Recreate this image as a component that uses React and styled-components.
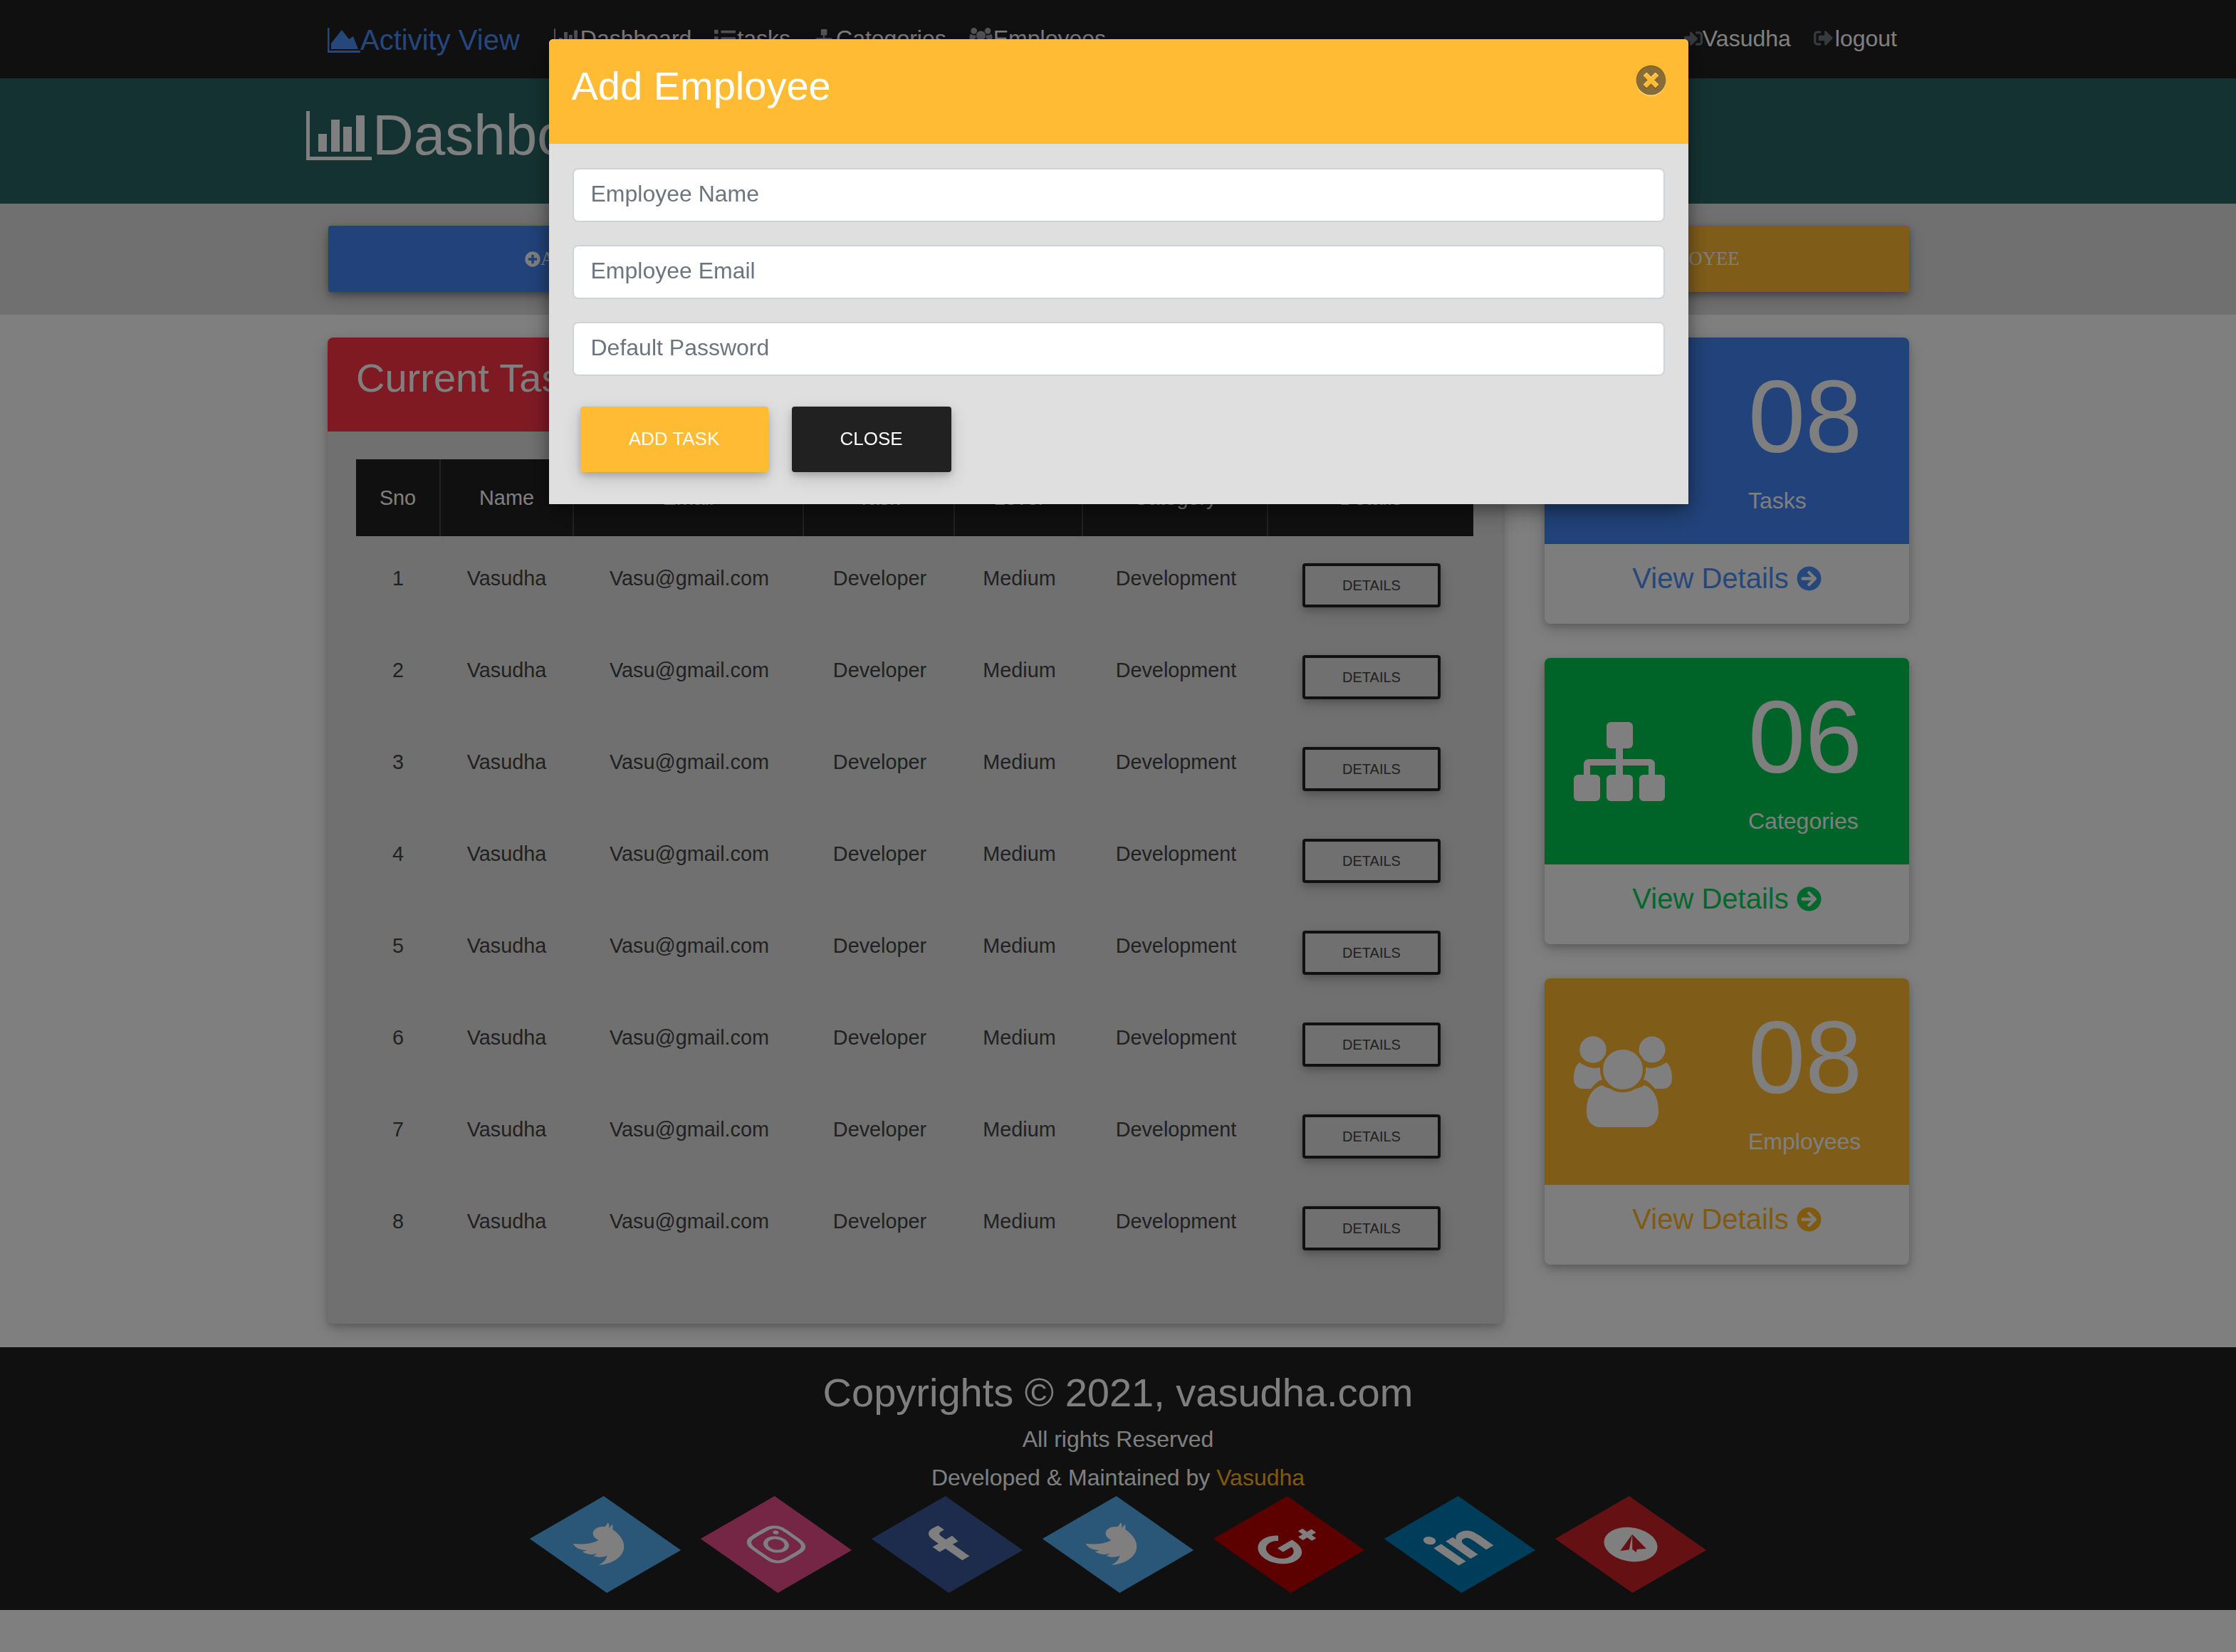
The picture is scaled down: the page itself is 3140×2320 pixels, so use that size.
import styled, { createGlobalStyle } from "styled-components";
import {
  FaList,
  FaPlusCircle,
  FaSignInAlt,
  FaSignOutAlt,
  FaTimesCircle,
  FaArrowCircleRight,
  FaTasks,
  FaTwitter,
  FaInstagram,
  FaFacebookF,
  FaGooglePlusG,
  FaLinkedinIn,
} from "react-icons/fa";

const rows = [1, 2, 3, 4, 5, 6, 7, 8];
const columns = [
  { label: "Sno", width: 118 },
  { label: "Name", width: 187 },
  { label: "Email", width: 323 },
  { label: "Task", width: 212 },
  { label: "Level", width: 180 },
  { label: "Category", width: 260 },
  { label: "Details", width: 289 },
];

const GlobalStyle = createGlobalStyle`
  * { box-sizing: border-box; }
  body {
    margin: 0;
    background: #fff;
    font-family: "Liberation Sans", Arial, sans-serif;
    font-size: 32px;
    color: #424242;
  }
`;

const AreaIcon = () => (
  <svg width="46" height="35" viewBox="0 0 46 35" fill="currentColor">
    <path d="M0 0h2.5v32H46v3H0z" />
    <path d="M5 30v-8L20 3l10 13 6-4 7 18z" />
  </svg>
);

const BarIcon = ({ width, height }) => (
  <svg width={width} height={height} viewBox="0 0 92 69" fill="currentColor">
    <path d="M0 0h5v64h87v5H0z" />
    <rect x="17" y="32" width="12" height="25" />
    <rect x="35" y="12" width="12" height="45" />
    <rect x="52" y="22" width="12" height="35" />
    <rect x="70" y="6" width="12" height="51" />
  </svg>
);

const SitemapIcon = ({ width, height }) => (
  <svg width={width} height={height} viewBox="0 0 128 111" fill="currentColor">
    <rect x="46" y="0" width="37" height="37" rx="6" />
    <rect x="0" y="74" width="37" height="37" rx="6" />
    <rect x="46" y="74" width="37" height="37" rx="6" />
    <rect x="92" y="74" width="36" height="37" rx="6" />
    <rect x="59" y="36" width="10" height="40" />
    <path d="M14 76V60q0-8 8-8h84q8 0 8 8v16h-9V61H23v15z" />
  </svg>
);

const UsersIcon = ({ width, height, cut }) => (
  <svg width={width} height={height} viewBox="0 0 138 128" fill="currentColor">
    <circle cx="27" cy="19" r="18.7" />
    <circle cx="110" cy="19" r="18.5" />
    <path d="M8 37c6 4 14 8 22 8 3 0 5-1 7-1 0 6 1 12 4 17-7 1-12 7-17 13H14C4 74 0 68 0 60c0-10 2-18 8-23z" />
    <path d="M130 37c-6 4-14 8-22 8-3 0-5-1-7-1 0 6-1 12-4 17 7 1 12 7 17 13h10c10 0 14-6 14-14 0-10-2-18-8-23z" />
    <path d="M18 106c0-18 6-32 22-37 10 9 48 9 59 0 14 5 20 19 20 37 0 14-9 22-19 22H37c-10 0-19-8-19-22z" />
    <circle cx="69" cy="47" r="30" stroke={cut} strokeWidth="4" />
  </svg>
);

const PlaneIcon = () => (
  <svg width="60" height="60" viewBox="0 0 60 60" fill="currentColor" fillRule="evenodd">
    <path d="M30 0a30 30 0 1 0 0 60a30 30 0 1 0 0-60zM44.3 18.7L12.5 30.4L22 35.25zM44.3 18.7L25.4 36.9L25 43.4L29.5 40.2L38.5 46.2z" />
  </svg>
);

export default function App() {
  return (
    <>
      <GlobalStyle />
      <Nav>
        <Brand>
          <AreaIcon />
          Activity View
        </Brand>
        <NavLinks>
          <NavLink>
            <NavIcon $width={37}><BarIcon width={37} height={28} /></NavIcon>
            Dashboard
          </NavLink>
          <NavLink>
            <NavIcon $width={32}><FaList size={30} /></NavIcon>
            tasks
          </NavLink>
          <NavLink>
            <NavIcon $width={32}><SitemapIcon width={30} height={26} /></NavIcon>
            Categories
          </NavLink>
          <NavLink>
            <NavIcon $width={34}><UsersIcon width={33} height={30} cut="#212121" /></NavIcon>
            Employees
          </NavLink>
        </NavLinks>
        <NavRight>
          <NavLink>
            <NavIcon $width={26} $dark><FaSignInAlt size={26} /></NavIcon>
            Vasudha
          </NavLink>
          <NavLink>
            <NavIcon $width={30} $dark><FaSignOutAlt size={27} /></NavIcon>
            logout
          </NavLink>
        </NavRight>
      </Nav>

      <TitleBand>
        <BarIcon width={92} height={69} />
        <PageTitle>Dashboard</PageTitle>
      </TitleBand>

      <ActionBand>
        <ActionButton $bg="#4285f4"><FaPlusCircle size={22} />ADD TASK</ActionButton>
        <ActionButton $bg="#00c851"><FaPlusCircle size={22} />ADD CATEGORY</ActionButton>
        <ActionButton $bg="#ffbb33"><FaPlusCircle size={22} />ADD EMPLOYEE</ActionButton>
      </ActionBand>

      <Main>
        <TaskCard>
          <TaskHeader>Current Tasks</TaskHeader>
          <TaskBody>
            <TaskTable>
              <colgroup>
                {columns.map((c) => (
                  <TableCol key={c.label} $width={c.width} />
                ))}
              </colgroup>
              <thead>
                <tr>
                  {columns.map((c) => (
                    <HeadCell key={c.label}>{c.label}</HeadCell>
                  ))}
                </tr>
              </thead>
              <tbody>
                {rows.map((n) => (
                  <tr key={n}>
                    <Cell>{n}</Cell>
                    <Cell>Vasudha</Cell>
                    <Cell>Vasu@gmail.com</Cell>
                    <Cell>Developer</Cell>
                    <Cell>Medium</Cell>
                    <Cell>Development</Cell>
                    <Cell>
                      <DetailsButton>DETAILS</DetailsButton>
                    </Cell>
                  </tr>
                ))}
              </tbody>
            </TaskTable>
          </TaskBody>
        </TaskCard>

        <StatColumn>
          <StatCard>
            <StatTop $bg="#4285f4">
              <StatIcon><FaTasks size={110} /></StatIcon>
              <StatText>
                <StatNumber>08</StatNumber>
                <StatLabel>Tasks</StatLabel>
              </StatText>
            </StatTop>
            <StatLink $color="#4a8ef8">View Details <FaArrowCircleRight size={35} /></StatLink>
          </StatCard>
          <StatCard>
            <StatTop $bg="#00c851">
              <StatIcon><SitemapIcon width={128} height={111} /></StatIcon>
              <StatText>
                <StatNumber>06</StatNumber>
                <StatLabel>Categories</StatLabel>
              </StatText>
            </StatTop>
            <StatLink $color="#00d058">View Details <FaArrowCircleRight size={35} /></StatLink>
          </StatCard>
          <StatCard>
            <StatTop $bg="#ffbb33">
              <StatIcon><UsersIcon width={138} height={128} cut="#ffbb33" /></StatIcon>
              <StatText>
                <StatNumber>08</StatNumber>
                <StatLabel>Employees</StatLabel>
              </StatText>
            </StatTop>
            <StatLink $color="#ffb41e">View Details <FaArrowCircleRight size={35} /></StatLink>
          </StatCard>
        </StatColumn>
      </Main>

      <Footer>
        <Copyright>Copyrights © 2021, vasudha.com</Copyright>
        <FooterLine>All rights Reserved</FooterLine>
        <FooterLine $gap={6}>
          Developed &amp; Maintained by <FooterName>Vasudha</FooterName>
        </FooterLine>
        <SocialRow>
          <SocialTile $bg="#55acee"><FaTwitter size={64} /></SocialTile>
          <SocialTile $bg="#ea4c89"><FaInstagram size={64} /></SocialTile>
          <SocialTile $bg="#3b5998"><FaFacebookF size={60} /></SocialTile>
          <SocialTile $bg="#55acee"><FaTwitter size={64} /></SocialTile>
          <SocialTile $bg="#bb0000"><FaGooglePlusG size={82} /></SocialTile>
          <SocialTile $bg="#007bb6"><FaLinkedinIn size={66} /></SocialTile>
          <SocialTile $bg="#cb2027"><PlaneIcon /></SocialTile>
        </SocialRow>
      </Footer>

      <Backdrop>
        <Modal>
          <ModalHeader>
            <ModalTitle>Add Employee</ModalTitle>
            <CloseIcon><FaTimesCircle size={43} /></CloseIcon>
          </ModalHeader>
          <ModalBody>
            <Field placeholder="Employee Name" />
            <Field placeholder="Employee Email" />
            <Field placeholder="Default Password" />
            <ModalActions>
              <ModalButton $bg="#ffbb33" $width={264}>ADD TASK</ModalButton>
              <ModalButton $bg="#212121" $width={224}>CLOSE</ModalButton>
            </ModalActions>
          </ModalBody>
        </Modal>
      </Backdrop>
    </>
  );
}

const Nav = styled.nav`
  display: flex;
  align-items: center;
  height: 110px;
  padding: 0 460px;
  background: #212121;
  color: #fff;
`;

const Brand = styled.div`
  display: flex;
  align-items: center;
  font-size: 40px;
  color: #4a8ef8;
  margin-top: 3px;
`;

const NavLinks = styled.div`
  display: flex;
  margin-left: 32px;
  margin-top: -3px;
`;

const NavRight = styled(NavLinks)`
  margin-left: auto;
`;

const NavLink = styled.a`
  display: flex;
  align-items: center;
  padding: 0 16px;
  line-height: 48px;
`;

const NavIcon = styled.span`
  display: inline-flex;
  width: ${(p) => p.$width}px;
  color: ${(p) => (p.$dark ? "#6c757d" : "#aaa")};
`;

const TitleBand = styled.header`
  display: flex;
  align-items: flex-start;
  height: 176px;
  padding: 46px 0 0 430px;
  background: #2a6464;
  color: #fff;
`;

const PageTitle = styled.h1`
  margin: -14px 0 0 1px;
  font-size: 80px;
  font-weight: 400;
  line-height: 96px;
`;

const ActionBand = styled.section`
  display: grid;
  grid-template-columns: repeat(3, 1fr);
  gap: 52px;
  height: 156px;
  padding: 31px 459px 0 461px;
  background: #e0e0e0;
`;

const ActionButton = styled.button`
  height: 93px;
  border: 0;
  border-radius: 4px;
  background: ${(p) => p.$bg};
  color: #fff;
  font-family: "Liberation Serif", serif;
  font-size: 26.67px;
  box-shadow: 0 4px 10px rgba(0, 0, 0, 0.3), 0 8px 24px rgba(0, 0, 0, 0.2);

  svg {
    vertical-align: -3px;
  }
`;

const Main = styled.main`
  display: flex;
  justify-content: space-between;
  padding: 32px 459px 33px 460px;
`;

const TaskCard = styled.article`
  width: 1650px;
  height: 1385px;
  border-radius: 8px;
  background: #e0e0e0;
  box-shadow: 0 4px 10px rgba(0, 0, 0, 0.18), 0 8px 24px rgba(0, 0, 0, 0.16);
`;

const TaskHeader = styled.h2`
  height: 132px;
  margin: 0;
  padding: 23px 40px 0;
  border-radius: 8px 8px 0 0;
  background: #ff3547;
  color: #fff;
  font-size: 56px;
  font-weight: 400;
  line-height: 67px;
`;

const TaskBody = styled.div`
  padding: 39px 41px 0 40px;
`;

const TaskTable = styled.table`
  width: 1569px;
  border-collapse: collapse;
  table-layout: fixed;
  font-size: 28.8px;
`;

const TableCol = styled.col`
  width: ${(p) => p.$width}px;
`;

const HeadCell = styled.th`
  height: 108px;
  padding: 0;
  border-right: 2px solid #444;
  background: #212121;
  color: #fff;
  font-weight: 400;
  text-align: center;

  &:last-child {
    border-right: 0;
  }
`;

const Cell = styled.td`
  height: 129px;
  padding: 38px 0 0;
  text-align: center;
  vertical-align: top;
  line-height: 43px;

  &:nth-child(n + 3):not(:last-child) {
    padding-left: 3px;
  }
`;

const DetailsButton = styled.button`
  display: block;
  width: 194px;
  height: 62px;
  margin: 0 auto 0 49px;
  border: 4px solid #212121;
  border-radius: 4px;
  background: transparent;
  color: #424242;
  font-family: "Liberation Sans", Arial, sans-serif;
  font-size: 20px;
  box-shadow: 0 4px 10px rgba(0, 0, 0, 0.18), 0 8px 20px rgba(0, 0, 0, 0.12);
`;

const StatColumn = styled.aside`
  display: flex;
  flex-direction: column;
  gap: 48px;
  width: 512px;
`;

const StatCard = styled.article`
  height: 402px;
  overflow: hidden;
  border-radius: 8px;
  background: #fbfbfb;
  box-shadow: 0 4px 10px rgba(0, 0, 0, 0.18), 0 8px 24px rgba(0, 0, 0, 0.16);
`;

const StatTop = styled.div`
  display: flex;
  height: 290px;
  background: ${(p) => p.$bg};
  color: #fff;
`;

const StatIcon = styled.div`
  display: flex;
  align-items: center;
  width: 286px;
  padding-left: 41px;
`;

const StatText = styled.div`
  padding-top: 40px;
`;

const StatNumber = styled.div`
  font-size: 144px;
  line-height: 144px;
`;

const StatLabel = styled.div`
  margin-top: 21px;
  line-height: 48px;
`;

const StatLink = styled.a`
  display: flex;
  align-items: center;
  justify-content: center;
  gap: 11px;
  height: 112px;
  padding: 0 0 16px;
  color: ${(p) => p.$color};
  font-size: 40px;
`;

const Footer = styled.footer`
  height: 369px;
  padding-top: 30px;
  background: #212121;
  color: #fff;
  text-align: center;
`;

const Copyright = styled.div`
  font-size: 56px;
  line-height: 67px;
`;

const FooterLine = styled.div`
  margin-top: ${(p) => p.$gap || 8}px;
  line-height: 48px;
`;

const FooterName = styled.span`
  color: #ffb41e;
`;

const SocialRow = styled.div`
  display: flex;
  justify-content: center;
  gap: 120px;
  margin-top: 10px;
`;

const SocialTile = styled.a`
  display: flex;
  align-items: center;
  justify-content: center;
  width: 120px;
  height: 120px;
  background: ${(p) => p.$bg};
  color: #fff;
  transform: rotate(-30deg) skew(25deg);
`;

const Backdrop = styled.div`
  position: fixed;
  inset: 0;
  display: flex;
  justify-content: center;
  align-items: flex-start;
  padding: 55px 0 0 1px;
  background: rgba(0, 0, 0, 0.5);
`;

const Modal = styled.div`
  width: 1600px;
  border-radius: 6px 6px 0 0;
  background: #dfdfdf;
  box-shadow: 0 10px 34px rgba(0, 0, 0, 0.3), 0 6px 20px rgba(0, 0, 0, 0.25);
`;

const ModalHeader = styled.div`
  display: flex;
  justify-content: space-between;
  height: 147px;
  padding: 32px 31px 0 32px;
  border-radius: 6px 6px 0 0;
  background: #ffbb33;
`;

const ModalTitle = styled.h4`
  margin: 0;
  color: #fff;
  font-size: 56px;
  font-weight: 400;
  line-height: 67px;
`;

const CloseIcon = styled.span`
  margin-top: 4px;
  color: rgba(0, 0, 0, 0.48);
  filter: drop-shadow(0 2px 0 rgba(255, 255, 255, 0.6));
`;

const ModalBody = styled.div`
  display: flex;
  flex-direction: column;
  gap: 32px;
  height: 506px;
  padding: 34px 33px 0;
`;

const Field = styled.input`
  height: 76px;
  padding: 0 24px 3px;
  border: 2px solid #ced4da;
  border-radius: 8px;
  background: #fff;
  font-family: "Liberation Sans", Arial, sans-serif;
  font-size: 32px;

  &::placeholder {
    color: #6c757d;
    opacity: 1;
  }
`;

const ModalActions = styled.div`
  display: flex;
  gap: 33px;
  margin: 11px 0 0 11px;
`;

const ModalButton = styled.button`
  width: ${(p) => p.$width}px;
  height: 92px;
  padding-bottom: 2px;
  border: 0;
  border-radius: 4px;
  background: ${(p) => p.$bg};
  color: #fff;
  font-family: "Liberation Sans", Arial, sans-serif;
  font-size: 26px;
  box-shadow: 0 4px 10px rgba(0, 0, 0, 0.18), 0 8px 24px rgba(0, 0, 0, 0.16);
`;
